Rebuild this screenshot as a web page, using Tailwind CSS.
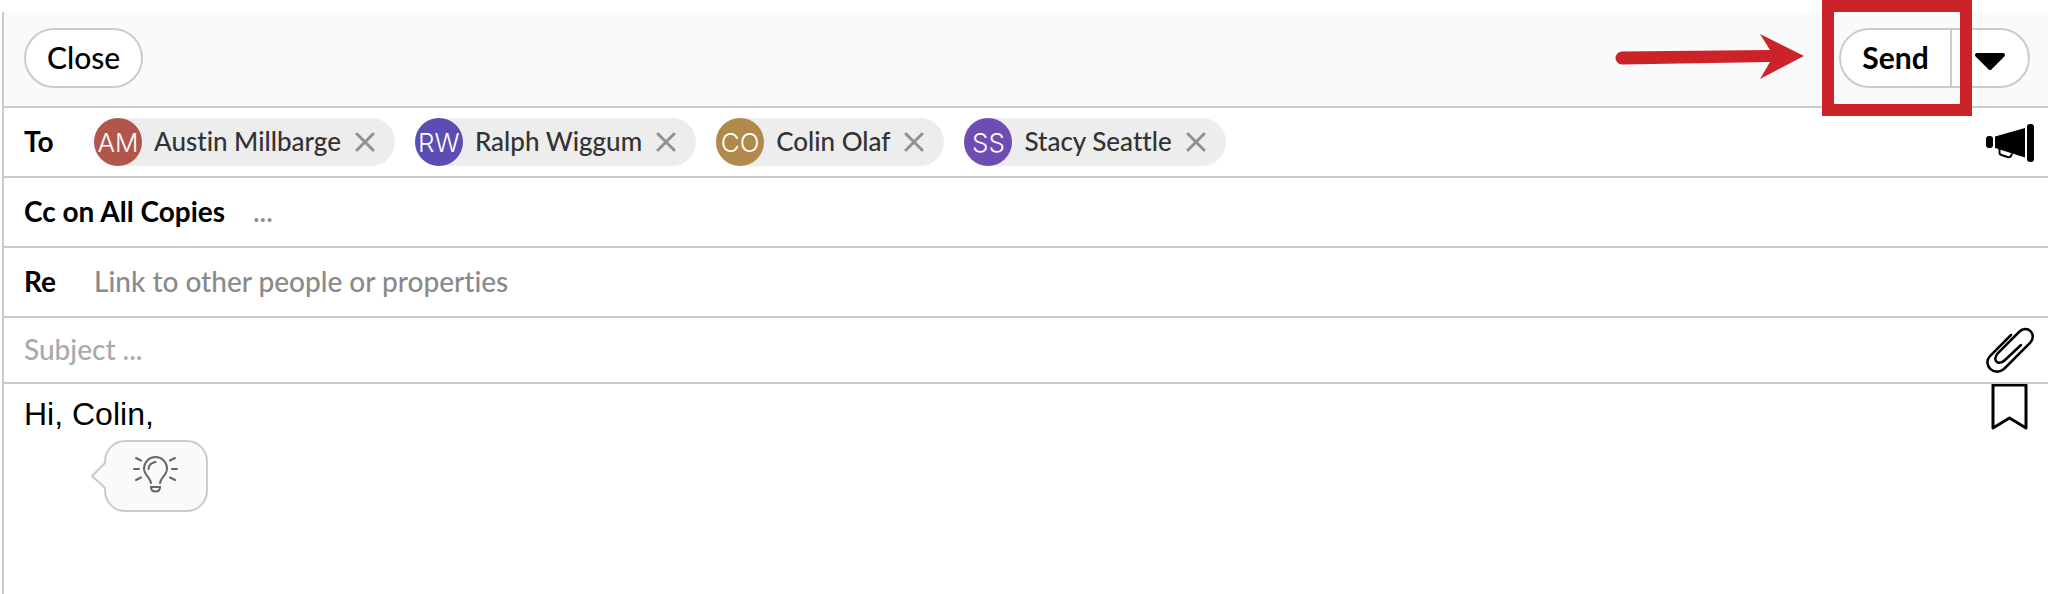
<!DOCTYPE html>
<html lang="en">

<head>
  <meta charset="UTF-8">
  <meta name="viewport" content="width=device-width, initial-scale=1.0">
  <title>Compose Message</title>
  <script src="https://cdn.jsdelivr.net/npm/@tailwindcss/browser@4"></script>
</head>

<body class="bg-white text-black font-['Lato','Liberation_Sans',sans-serif] [font-variant-ligatures:none]">
  <div class="pt-3 pl-0.5 min-h-screen flex flex-col">
    <div class="flex-1 flex flex-col border-l-2 border-[#cbcbcb]">

      <!-- Header -->
      <header class="relative flex items-center justify-between bg-[#fafafa] border-b-2 border-[#cbcbcb] pt-4 pb-[18px] pl-5 pr-[18px]">
        <button type="button" class="h-[60px] px-[21px] pb-0.5 rounded-full border-2 border-[#cbcbcb] bg-white text-[30px] font-medium">Close</button>

        <div class="flex h-[60px] rounded-full border-2 border-[#cbcbcb] bg-white">
          <button type="button" class="w-[109px] pb-0.5 text-[30px] font-bold">Send</button>
          <button type="button" aria-label="More send options" class="w-[78px] border-l-2 border-[#cbcbcb] flex items-center justify-center">
            <svg class="w-8 h-5 mt-2" viewBox="0 0 32 20"><path d="M3 3h26L16 16z" stroke="#000" stroke-width="4" stroke-linejoin="round"/></svg>
          </button>
        </div>

        <!-- Arrow and frame pointing at Send -->
        <svg class="absolute right-[244px] top-5 w-[190px] h-12" viewBox="0 0 190 48" fill="#cc232a"><path d="M8 19.500L156 18L146 2L190 24L146 47L156 30L8 32.500A6.500 6.500 0 0 1 8 19.500z"/></svg>
        <div class="absolute right-[76px] -top-3 w-[150px] h-[116px] border-12 border-[#cc232a] pointer-events-none"></div>
      </header>

      <!-- To -->
      <div class="flex items-center h-[70px] border-b-2 border-[#cbcbcb] pl-5 pr-[13px]">
        <span class="w-[70px] pb-0.5 text-[28px] font-bold">To</span>
        <ul class="flex-1 flex items-center gap-5 text-[26px] font-medium text-[#333]">
          <li class="flex items-center h-12 rounded-full bg-[#ededed] pr-5">
            <span class="size-12 rounded-full bg-[#b1564b] text-white text-[26px] font-light font-['Inter',sans-serif] flex items-center justify-center">AM</span>
            <span class="pl-3 pr-3.5 pb-0.5">Austin Millbarge</span>
            <button type="button" aria-label="Remove Austin Millbarge"><svg class="size-5" viewBox="0 0 20 20"><path d="M2 2l16 16M18 2L2 18" stroke="#909090" stroke-width="3" stroke-linecap="round"/></svg></button>
          </li>
          <li class="flex items-center h-12 rounded-full bg-[#ededed] pr-5">
            <span class="size-12 rounded-full bg-[#5b4db3] text-white text-[26px] font-light font-['Inter',sans-serif] flex items-center justify-center">RW</span>
            <span class="pl-3 pr-3.5 pb-0.5">Ralph Wiggum</span>
            <button type="button" aria-label="Remove Ralph Wiggum"><svg class="size-5" viewBox="0 0 20 20"><path d="M2 2l16 16M18 2L2 18" stroke="#909090" stroke-width="3" stroke-linecap="round"/></svg></button>
          </li>
          <li class="flex items-center h-12 rounded-full bg-[#ededed] pr-5">
            <span class="size-12 rounded-full bg-[#b1894b] text-white text-[26px] font-light font-['Inter',sans-serif] flex items-center justify-center">CO</span>
            <span class="pl-3 pr-3.5 pb-0.5">Colin Olaf</span>
            <button type="button" aria-label="Remove Colin Olaf"><svg class="size-5" viewBox="0 0 20 20"><path d="M2 2l16 16M18 2L2 18" stroke="#909090" stroke-width="3" stroke-linecap="round"/></svg></button>
          </li>
          <li class="flex items-center h-12 rounded-full bg-[#ededed] pr-5">
            <span class="size-12 rounded-full bg-[#6d4db3] text-white text-[26px] font-light font-['Inter',sans-serif] flex items-center justify-center">SS</span>
            <span class="pl-3 pr-3.5 pb-0.5">Stacy Seattle</span>
            <button type="button" aria-label="Remove Stacy Seattle"><svg class="size-5" viewBox="0 0 20 20"><path d="M2 2l16 16M18 2L2 18" stroke="#909090" stroke-width="3" stroke-linecap="round"/></svg></button>
          </li>
        </ul>
        <button type="button" aria-label="Announce">
          <svg class="size-[50px]" viewBox="0 0 50 50">
            <rect x="1" y="19" width="7" height="12" rx="3"/>
            <path d="M10 19.500L40 11V40.500L10 31z"/>
            <rect x="42" y="7" width="7" height="38" rx="3"/>
            <path d="M14.500 32v3.500q0 2 2 2.500l6 2q2.500.7 3.500-1l1-2.500" fill="none" stroke="#000" stroke-width="2"/>
          </svg>
        </button>
      </div>

      <!-- Cc -->
      <div class="flex items-center h-[70px] border-b-2 border-[#cbcbcb] pl-5 pr-[13px] pb-0.5 gap-7 text-[28px]">
        <span class="font-bold">Cc on All Copies</span>
        <button type="button" aria-label="Edit Cc" class="font-medium text-[#8a8a8a]">...</button>
      </div>

      <!-- Re -->
      <div class="flex items-center h-[70px] border-b-2 border-[#cbcbcb] pl-5 pr-[13px] pb-0.5 text-[28px]">
        <label for="re" class="w-[70px] font-bold">Re</label>
        <input id="re" type="text" placeholder="Link to other people or properties" class="flex-1 font-medium outline-none placeholder:text-[#8a8a8a]">
      </div>

      <!-- Subject -->
      <div class="flex items-center h-[66px] border-b-2 border-[#cbcbcb] pl-5 pr-[13px]">
        <input type="text" aria-label="Subject" placeholder="Subject ..." class="flex-1 pb-0.5 text-[28px] font-medium outline-none placeholder:text-[#a9a9ae]">
        <button type="button" aria-label="Attach file">
          <svg class="size-[50px]" viewBox="0 0 50 50" fill="none" stroke="#000" stroke-width="2.500" stroke-linecap="round"><path d="M26 10L5 31C-3 40 9 52 19 44L45 18C53 9 42-1 34 7L13 28C6 36 14 41 20 35L36 20"/></svg>
        </button>
      </div>

      <!-- Message -->
      <div class="flex-1 flex items-start pl-5 pr-[13px]">
        <div class="flex-1 pt-2.5">
          <textarea aria-label="Message" rows="1" class="block w-full h-10 resize-none outline-none overflow-hidden text-[32px] leading-10 font-['Liberation_Sans',Arial,sans-serif]">Hi, Colin,</textarea>
          <button type="button" aria-label="Suggestions" class="block ml-[66px] mt-1.5">
            <svg class="w-[118px] h-[74px]" viewBox="0 0 118 74" fill="none" stroke-linecap="round">
              <path d="M35 1H97A20 20 0 0 1 117 21V51A20 20 0 0 1 97 71H35A20 20 0 0 1 15 51V48L2 36L15 23V21A20 20 0 0 1 35 1z" fill="#fafafa" stroke="#cbcbcb" stroke-width="2"/>
              <g stroke="#666" stroke-width="2">
                <path d="M61 43C60 37 54 35 54 28.500A11.500 11.500 0 0 1 77 28.500C77 35 71 37 70 43M58.500 29Q59 23 65.500 22"/>
                <path d="M61 47h9q0 4.500-4.500 4.500T61 47z"/>
                <path d="M46 18l5 2.500M44 29h5M46 40l5-2.500M85 18l-5 2.500M87 29h-5M85 40l-5-2.500"/>
              </g>
            </svg>
          </button>
        </div>
        <button type="button" aria-label="Save as template">
          <svg class="size-[50px]" viewBox="0 0 50 50" fill="none" stroke="#000" stroke-width="3" stroke-linejoin="round"><path d="M8 1H41V44L24.500 34L8 44z"/></svg>
        </button>
      </div>

    </div>
  </div>
</body>
</html>
